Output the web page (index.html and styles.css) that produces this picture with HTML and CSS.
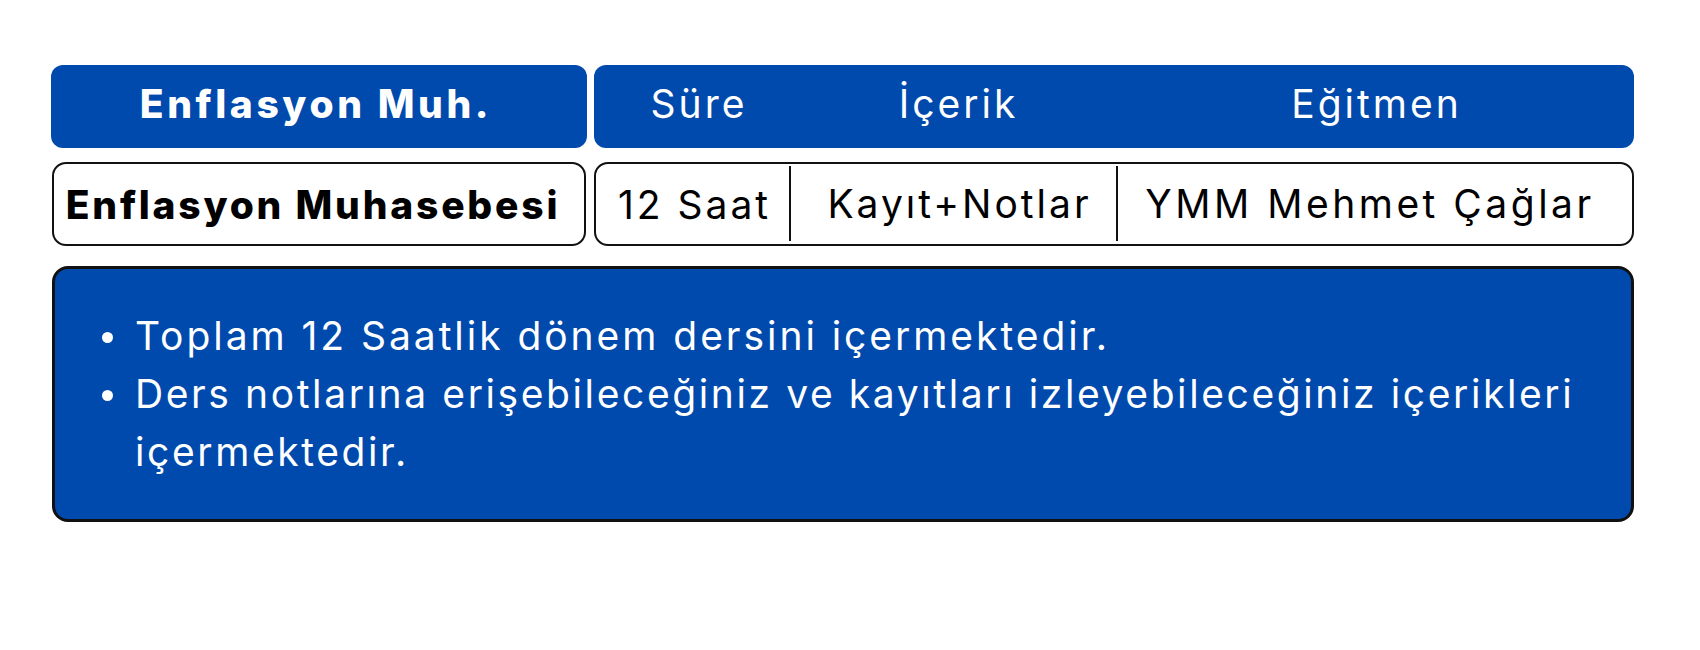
FILE: index.html
```html
<!DOCTYPE html>
<html lang="tr">
<head>
<meta charset="utf-8">
<title>Enflasyon Muhasebesi</title>
<link rel="stylesheet" href="styles.css">
</head>
<body>
<main class="page">
  <div class="row head-row">
    <div class="cell-title head-title">Enflasyon Muh.</div>
    <div class="cols head-cols">
      <div class="col">Süre</div>
      <div class="col">İçerik</div>
      <div class="col">Eğitmen</div>
    </div>
  </div>
  <div class="row data-row">
    <div class="cell-title data-title">Enflasyon Muhasebesi</div>
    <div class="cols data-cols">
      <div class="col">12 Saat</div>
      <div class="col sep">Kayıt+Notlar</div>
      <div class="col sep">YMM Mehmet Çağlar</div>
    </div>
  </div>
  <section class="info">
    <ul class="info-list">
      <li>Toplam 12 Saatlik dönem dersini içermektedir.</li>
      <li>Ders notlarına erişebileceğiniz ve kayıtları izleyebileceğiniz içerikleri içermektedir.</li>
    </ul>
  </section>
</main>
</body>
</html>
```
FILE: styles.css
```css
html, body {
  margin: 0;
  padding: 0;
  background: #ffffff;
}
body {
  font-family: Inter, "Noto Sans", "Liberation Sans", sans-serif;
  color: #000;
}
.page {
  width: 1583px;
  padding: 65px 0 0 51px;
  display: flex;
  flex-direction: column;
}
.row {
  display: flex;
  gap: 7px;
}
.head-row {
  height: 83px;
}
.data-row {
  height: 84px;
  margin-top: 14px;
}
.cell-title {
  width: 536px;
  display: flex;
  align-items: center;
  justify-content: center;
  box-sizing: border-box;
  font-weight: 800;
  font-size: 39px;
  letter-spacing: 3.6px;
}
.head-title {
  background: #004aad;
  color: #fff;
  border-radius: 12px;
  padding: 0 6px 7px 0;
}
.data-title {
  border: 2px solid #111;
  border-radius: 14px;
  margin-left: 1px;
  width: 534px;
  letter-spacing: 2.8px;
  padding-right: 12px;
}
.cols {
  flex: 1;
  display: grid;
  grid-template-columns: 196px 327px 1fr;
  box-sizing: border-box;
  font-size: 39px;
  letter-spacing: 3px;
}
.head-cols {
  background: #004aad;
  color: #fff;
  border-radius: 12px;
}
.head-cols .col {
  padding-bottom: 7px;
}
.head-cols .col:nth-child(1) { padding-left: 14px; }
.head-cols .col:nth-child(2) { padding-left: 10px; }
.head-cols .col:nth-child(3) { padding-left: 2px; }
.data-cols {
  border: 2px solid #111;
  border-radius: 14px;
  margin-left: 1px;
  grid-template-columns: 193px 327px 1fr;
}
.col {
  display: flex;
  align-items: center;
  justify-content: center;
  white-space: nowrap;
}
.data-cols .col:nth-child(1) { padding-left: 4px; }
.data-cols .col:nth-child(2) { padding-left: 12px; }
.data-cols .col:nth-child(3) { padding-right: 10px; letter-spacing: 3.5px; }
.sep {
  border-left: 2px solid #111;
  margin: 2px 0 3px;
}
.info {
  margin-top: 20px;
  margin-left: 1px;
  height: 256px;
  box-sizing: border-box;
  background: #004aad;
  border: 3px solid #111;
  border-radius: 16px;
  color: #fff;
  padding: 38px 0 0 0;
}
.info-list {
  margin: 0;
  padding: 0 0 0 80px;
  font-size: 39px;
  line-height: 58px;
  letter-spacing: 2.75px;
  list-style: none;
}
.info-list li {
  position: relative;
}
.info-list li:first-child {
  letter-spacing: 2.95px;
}
.info-list li:last-child {
  letter-spacing: 2.6px;
}
.info-list li::before {
  content: "";
  position: absolute;
  left: -33px;
  top: 25px;
  width: 11px;
  height: 11px;
  border-radius: 50%;
  background: #fff;
}
```
